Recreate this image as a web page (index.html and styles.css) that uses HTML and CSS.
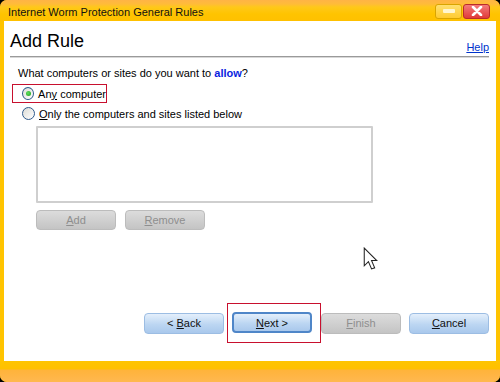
FILE: index.html
```html
<!DOCTYPE html>
<html>
<head>
<meta charset="utf-8">
<link rel="stylesheet" href="styles.css">
</head>
<body>
<div class="window">
  <div class="titlebar">
    <span class="title">Internet Worm Protection General Rules</span>
    <div class="winbtns">
      <span class="wbtn min"><span class="dash"></span></span>
      <span class="wbtn close">
        <svg width="14" height="10" viewBox="0 0 14 10"><path d="M3 1 L11 9 M11 1 L3 9" stroke="#fff" stroke-width="2.6" stroke-linecap="round"/></svg>
      </span>
    </div>
  </div>
  <div class="body">
    <div class="header">
      <h1 class="heading">Add Rule</h1>
      <a class="help">Help</a>
    </div>
    <div class="rule"></div>
    <p class="question">What computers or sites do you want to <b class="allow">allow</b>?</p>
    <div class="option boxed">
      <span class="radio checked"><span class="dot"></span></span>
      <span class="label">An<u>y</u> computer</span>
    </div>
    <div class="option">
      <span class="radio"></span>
      <span class="label"><u>O</u>nly the computers and sites listed below</span>
    </div>
    <div class="listbox"></div>
    <div class="smallbtns">
      <span class="btn disabled"><span><u>A</u>dd</span></span>
      <span class="btn disabled"><span><u>R</u>emove</span></span>
    </div>
    <div class="spacer"></div>
    <div class="navbtns">
      <span class="btn blue"><span>&lt; <u>B</u>ack</span></span>
      <span class="nextwrap"><span class="btn blue focus"><span><u>N</u>ext &gt;</span></span></span>
      <span class="btn disabled"><span><u>F</u>inish</span></span>
      <span class="btn blue"><span><u>C</u>ancel</span></span>
    </div>
    <svg class="cursor" width="15" height="25" viewBox="0 0 14 24">
      <path d="M1 1 L1 18 L5 14 L8 21 L11 20 L8 13 L13 13 Z" fill="#fff" stroke="#222" stroke-width="1"/>
    </svg>
  </div>
  <div class="footer"></div>
</div>
</body>
</html>
```

FILE: styles.css
```css
html, body {
  margin: 0;
  padding: 0;
  background: #000;
}
.window {
  width: 500px;
  height: 382px;
  display: flex;
  flex-direction: column;
  font-family: "Liberation Sans", Arial, sans-serif;
  font-size: 11px;
  color: #000;
  border-radius: 7px;
  overflow: hidden;
  background: #ffc400;
}
.titlebar {
  height: 21px;
  flex: none;
  display: flex;
  align-items: center;
  justify-content: space-between;
  background: linear-gradient(#ffb445 0px, #ffbb3a 4px, #ffc81a 7px, #ffc400 14px, #ffc000 21px);
  padding: 0 10px 0 8px;
}
.title {
  font-size: 11px;
  color: #111;
  padding-top: 3px;
}
.winbtns {
  display: flex;
  gap: 1px;
  padding-top: 1px;
}
.wbtn {
  width: 27px;
  height: 15px;
  box-sizing: border-box;
  border-radius: 3px;
  display: flex;
  align-items: center;
  justify-content: center;
}
.min {
  background: linear-gradient(#ffe070, #ffcb30);
  border: 1px solid #d9a400;
}
.dash {
  width: 12px;
  height: 4px;
  background: #fff6d0;
  border-radius: 1px;
}
.close {
  background: linear-gradient(#f47a7a, #e03a3a);
  border: 1px solid #b82c2c;
}
.body {
  flex: 1;
  position: relative;
  background: #fff;
  margin: 0 4px;
  display: flex;
  flex-direction: column;
  padding: 0 7px 0 6px;
}
.header {
  display: flex;
  justify-content: space-between;
  align-items: flex-end;
  height: 35px;
}
.heading {
  margin: 0;
  font-size: 18px;
  font-weight: normal;
  line-height: 22px;
  padding-bottom: 4px;
}
.help {
  color: #0033cc;
  text-decoration: underline;
  font-size: 11px;
  padding-bottom: 3px;
}
.rule {
  height: 1px;
  background: #9a9a9a;
  border-bottom: 1px solid #d8d8d8;
}
.question {
  margin: 8px 0 0 8px;
  line-height: 14px;
}
.allow {
  color: #0a1ee0;
}
.option {
  display: flex;
  align-items: center;
  gap: 4px;
  height: 19px;
  margin-left: 2px;
  padding-left: 10px;
}
.label {
  white-space: nowrap;
}
.option.boxed {
  box-sizing: border-box;
  margin-top: 4px;
  width: 95px;
  height: 19px;
  border: 1px solid #c8102e;
  padding-left: 9px;
  margin-bottom: 1px;
}
.radio {
  width: 11px;
  height: 11px;
  border: 1px solid #2f5a8c;
  border-radius: 50%;
  background: linear-gradient(135deg, #dcdcd6, #fff);
  display: flex;
  align-items: center;
  justify-content: center;
}
.dot {
  width: 5px;
  height: 5px;
  border-radius: 50%;
  background: radial-gradient(circle at 40% 40%, #5ee05e, #1d9a1d);
}
.listbox {
  margin: 3px 0 0 26px;
  width: 333px;
  height: 73px;
  border: 2px solid #cfcfcf;
  border-radius: 1px;
}
.smallbtns {
  display: flex;
  gap: 9px;
  margin: 7px 0 0 26px;
}
.btn {
  width: 80px;
  height: 20px;
  box-sizing: border-box;
  border-radius: 4px;
  display: flex;
  align-items: center;
  justify-content: center;
  font-size: 11px;
  flex: none;
}
.disabled {
  background: linear-gradient(#dcdcdc, #c4c4c4);
  border: 1px solid #bcbcbc;
  color: #8e8e8e;
}
.blue {
  background: linear-gradient(#e4effb, #bcd6f2 55%, #a9c8ec);
  border: 1px solid #9cbde3;
  color: #111;
}
.focus {
  border: 2px solid #4f86c8;
}
.spacer {
  flex: 1;
}
.navbtns {
  display: flex;
  align-items: center;
  gap: 8px;
  justify-content: flex-end;
  margin-bottom: 18px;
  height: 40px;
}
.navbtns .btn {
  height: 21px;
}
.nextwrap {
  border: 1px solid #c8102e;
  height: 40px;
  width: 94px;
  box-sizing: border-box;
  display: flex;
  align-items: center;
  justify-content: flex-start;
  margin: 0 -8px 0 -5px;
  padding-left: 4px;
  padding-bottom: 1px;
  flex: none;
}
.cursor {
  position: absolute;
  left: 359px;
  top: 226px;
}
.footer {
  height: 21px;
  flex: none;
  background: linear-gradient(#ffc400 0px, #ffc000 8px, #ffb33a 9px, #ffb850 21px);
}
```
